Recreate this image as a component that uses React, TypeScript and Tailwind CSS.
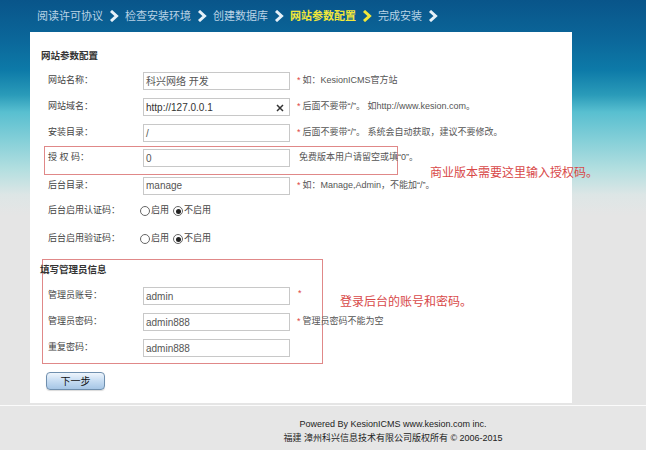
import React from "react";

const FONT = '"Liberation Sans","Noto Sans CJK SC",sans-serif';

function Chevron({ color }: { color: string }) {
  return (
    <svg width="10" height="12" viewBox="0 0 10 12" className="mx-[6px] shrink-0">
      <path d="M2 1 L7.5 6 L2 11" fill="none" stroke={color} strokeWidth="3" strokeLinejoin="miter" />
    </svg>
  );
}

function Hint({ text, star = true }: { text: string; star?: boolean }) {
  return (
    <span className="ml-[7px] text-[9px] text-[#555] whitespace-nowrap shrink-0">
      {star && <span className="text-[#e04444] mr-[2px]">*</span>}
      {text}
    </span>
  );
}

function Input({ value, dark, clear }: { value: string; dark?: boolean; clear?: boolean }) {
  return (
    <div
      className={`relative shrink-0 w-[147px] h-[18px] border border-[#c8c8c8] bg-white flex items-center pl-[2px] text-[10px] ${dark ? "text-[#333]" : "text-[#555]"}`}
    >
      {value}
      {clear && (
        <svg width="8" height="8" viewBox="0 0 8 8" className="absolute right-[5px] top-[4.5px]">
          <path d="M1 1 L7 7 M7 1 L1 7" stroke="#333" strokeWidth="1.5" />
        </svg>
      )}
    </div>
  );
}

function Label({ children }: { children: React.ReactNode }) {
  return <div className="w-[99px] shrink-0 pl-[4px] text-[9px] text-[#444] whitespace-nowrap">{children}</div>;
}

function Row({ label, children, h = 26 }: { label: string; children: React.ReactNode; h?: number }) {
  return (
    <div className="flex items-center" style={{ height: h }}>
      <Label>{label}</Label>
      {children}
    </div>
  );
}

function Radio({ checked }: { checked?: boolean }) {
  return (
    <span className="inline-flex w-[10px] h-[10px] rounded-full border border-[#666] bg-white items-center justify-center">
      {checked && <span className="w-[5px] h-[5px] rounded-full bg-[#222]" />}
    </span>
  );
}

function Radios() {
  return (
    <div className="flex items-center text-[9px] text-[#444] -ml-[3px]">
      <Radio />
      <span className="ml-[1px]">启用</span>
      <span className="ml-[4px]" />
      <Radio checked />
      <span className="ml-[1px]">不启用</span>
    </div>
  );
}

export default function App() {
  const steps = ["阅读许可协议", "检查安装环境", "创建数据库", "网站参数配置", "完成安装"];
  return (
    <div
      className="relative w-[646px] h-[450px] overflow-hidden flex flex-col bg-[linear-gradient(to_bottom,#09558a_0px,#0b679a_40px,#0d7aa8_70px,#2a9bb9_95px,#58bfd0_112px,#84cfd8_140px,#b4dfe0_170px,#dde6e6_195px,#e5e5e5_215px,#e5e5e5_100%)]"
      style={{ fontFamily: FONT }}
    >
      {/* nav */}
      <div className="h-[32px] flex items-center pl-[37px] text-[11px]">
        {steps.map((s, i) => {
          const active = i === 3;
          return (
            <React.Fragment key={s}>
              <span className={active ? "text-[#f2e83a] font-bold" : "text-[#b9d3e6]"}>{s}</span>
              <Chevron color={active ? "#f2e83a" : "#e6f0f8"} />
            </React.Fragment>
          );
        })}
      </div>

      {/* panel */}
      <div className="ml-[30px] w-[542px] h-[371px] bg-white pl-[12px] shrink-0">
        <div className="pt-[18px] text-[9.5px] leading-[12px] font-bold text-[#333] -ml-[1px]">网站参数配置</div>
        <div className="mt-[6px] ml-[2px]">
          <Row label="网站名称：">
            <Input value="科兴网络 开发" />
            <Hint text="如：KesionICMS官方站" />
          </Row>
          <Row label="网站域名：">
            <Input value="http://127.0.0.1" dark clear />
            <Hint text="后面不要带“/”。 如http://www.kesion.com。" />
          </Row>
          <Row label="安装目录：">
            <Input value="/" />
            <Hint text="后面不要带“/”。 系统会自动获取，建议不要修改。" />
          </Row>
          <div className="w-[354px] h-[29px] border border-[#e08888] pt-[2px]">
            <div className="flex items-center h-[18px] -ml-[1px]">
              <Label>授 权 码：</Label>
              <Input value="0" />
              <span className="ml-[9px] text-[9px] text-[#555] whitespace-nowrap shrink-0">免费版本用户请留空或填“0”。</span>
            </div>
          </div>
          <Row label="后台目录：" h={21}>
            <Input value="manage" />
            <Hint text="如：Manage,Admin，不能加“/”。" />
          </Row>
          <Row label="后台启用认证码：" h={30}>
            <Radios />
          </Row>
          <Row label="后台启用验证码：">
            <Radios />
          </Row>
        </div>

        {/* admin box */}
        <div className="mt-[7px] w-[281px] h-[105px] border border-[#e08888]">
          <div className="h-[23px] leading-[20px] text-[9.5px] font-bold text-[#333] -ml-[3px] whitespace-nowrap">
            填写管理员信息
          </div>
          <div className="ml-[1px]">
            <Row label="管理员账号：">
              <Input value="admin" />
              <span className="ml-[8px] text-[9px] text-[#e04444] -mt-[5px] shrink-0">*</span>
            </Row>
            <Row label="管理员密码：">
              <Input value="admin888" />
              <Hint text="管理员密码不能为空" />
            </Row>
            <Row label="重复密码：">
              <Input value="admin888" />
            </Row>
          </div>
        </div>

        <button className="mt-[8px] ml-[4px] w-[59px] h-[18px] rounded-[4px] border border-[#6f8fae] bg-[linear-gradient(to_bottom,#eef5fc,#c6dcf2_50%,#a6c6e6)] text-[10px] text-[#111] flex items-center justify-center shadow-[0_1px_1px_rgba(0,0,0,0.15)]">
          下一步
        </button>
      </div>

      {/* footer */}
      <div className="mt-[2px] border-t border-[#fbfbfb] flex-1 bg-[#e6e6e6] pl-[140px] text-center text-[9px] text-[#222]">
        <div className="mt-[11px] leading-[14px]">Powered By KesionICMS www.kesion.com inc.</div>
        <div className="leading-[14px]">福建 漳州科兴信息技术有限公司版权所有 © 2006-2015</div>
      </div>

      {/* annotations */}
      <div className="absolute left-[430px] top-[164px] text-[12px] text-[#d84848] whitespace-nowrap">
        商业版本需要这里输入授权码。
      </div>
      <div className="absolute left-[340px] top-[293px] text-[12px] text-[#d84848] whitespace-nowrap">
        登录后台的账号和密码。
      </div>
    </div>
  );
}
